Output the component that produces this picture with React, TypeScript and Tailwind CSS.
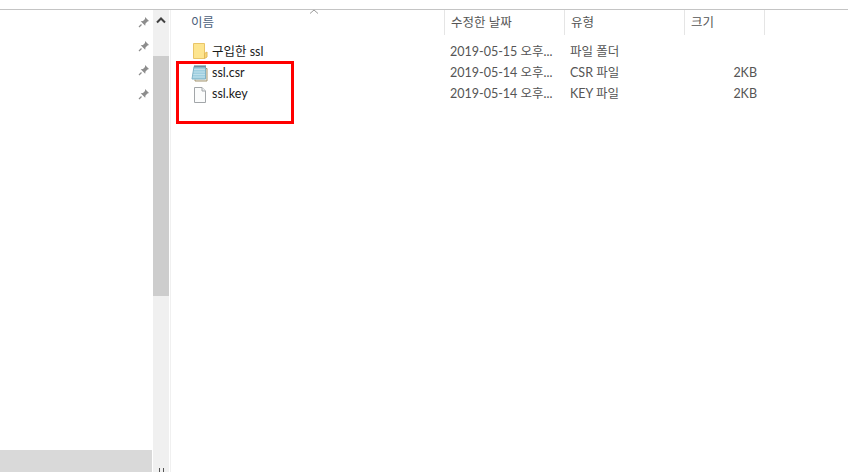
import React from "react";

const font = { fontFamily: 'Lato, "Noto Sans CJK KR", sans-serif' };

const FolderIcon = () => (
  <svg width="16" height="18" viewBox="0 0 16 18" className="shrink-0 -mt-[2px] mb-[2px]">
    <path d="M1.500 1.500h11v15h-11z" fill="#fde58f" stroke="#e9c568" />
    <path d="M12.500 16.500v-5l2.500-1.500v5z" fill="#f8d775" stroke="#e2b95a" />
  </svg>
);

const CsrIcon = () => (
  <svg width="17" height="17" viewBox="0 0 17 17" className="shrink-0 -ml-[1px]">
    <path d="M14.500 3.500h1.500v12.500h-12v-1.500" fill="#f3f1e8" stroke="#a39570" />
    <path d="M3 1.500h11.500v12.500h-13.500z" fill="#9fcfe0" stroke="#7fb2c6" />
    <path d="M3 4.500h11M2.700 7h11.300M2.300 9.500h11.700M1.800 12h12.200" stroke="#bfe0eb" />
    <path d="M4 0v2.500M6 0v2.500M8 0v2.500M10 0v2.500M12 0v2.500M14 0v2.500" stroke="#55707c" />
  </svg>
);

const BlankIcon = () => (
  <svg width="16" height="18" viewBox="0 0 16 18" className="shrink-0">
    <path d="M2.500 1.500h7.500l3.500 3.500v11.500h-11z" fill="#fbfcfc" stroke="#a2a6a9" />
    <path d="M10 1.500v3.500h3.500" fill="#eef0f1" stroke="#a2a6a9" />
  </svg>
);

const PinIcon = () => (
  <svg width="12" height="12" viewBox="0 0 12 12" className="shrink-0">
    <path d="M7 1l4 4-1.500.5-2 2-.300 2.300-4.500-4.500 2.300-.300 2-2z" fill="#8d8d8d" />
    <path d="M3.500 8.500L1 11" stroke="#8d8d8d" strokeWidth="1.200" />
  </svg>
);

const columns = [
  { label: "수정한 날짜", width: "w-[120px]" },
  { label: "유형", width: "w-[120px]" },
  { label: "크기", width: "w-[80px]" },
];

const rows = [
  { name: "구입한 ssl", date: "2019-05-15 오후...", type: "파일 폴더", size: "", icon: <FolderIcon /> },
  { name: "ssl.csr", date: "2019-05-14 오후...", type: "CSR 파일", size: "2KB", icon: <CsrIcon /> },
  { name: "ssl.key", date: "2019-05-14 오후...", type: "KEY 파일", size: "2KB", icon: <BlankIcon /> },
];

export default function App() {
  return (
    <div className="relative w-[848px] h-[472px] overflow-hidden bg-white text-[12.500px]" style={font}>
      <div className="h-[9px]" />
      <div className="h-[1px] bg-[#c4c4c4]" />
      <div className="flex h-[462px]">
        {/* nav pane */}
        <div className="w-[153px] flex flex-col justify-between">
          <div className="flex flex-col items-end gap-[12px] pt-[6px] pr-[3px]">
            <PinIcon />
            <PinIcon />
            <PinIcon />
            <PinIcon />
          </div>
          <div className="h-[22px] mr-[1px] bg-[#d9d9d9]" />
        </div>

        {/* scrollbar */}
        <div className="w-[16px] bg-[#f0f0f0] flex flex-col justify-between">
          <div>
            <div className="h-[46px] flex items-start justify-center pt-[7px]">
              <svg width="10" height="7" viewBox="0 0 10 7">
                <path d="M1 5.500L5 1.500l4 4" fill="none" stroke="#404040" strokeWidth="2" />
              </svg>
            </div>
            <div className="h-[240px] bg-[#cdcdcd]" />
          </div>
          <div className="h-[4px] flex justify-center gap-[3px]">
            <div className="w-[1px] h-[4px] bg-[#555]" />
            <div className="w-[1px] h-[4px] bg-[#555]" />
          </div>
        </div>
        <div className="w-[1px]" />
        <div className="w-[1px] bg-[#f0f0f0]" />

        {/* file list */}
        <div className="flex-1 relative">
          <div className="flex h-[25px] text-[#4c607a]">
            <div className="w-[273px] pl-[20px] leading-[25px]">이름</div>
            {columns.map((c) => (
              <div key={c.label} className={`${c.width} border-l border-[#e5e5e5] pl-[6px] leading-[25px] text-[#555]`}>
                {c.label}
              </div>
            ))}
            <div className="border-l border-[#e5e5e5]" />
          </div>
          <div className="absolute left-[138px] top-[-1px]">
            <svg width="10" height="5" viewBox="0 0 10 5">
              <path d="M1 4.500L5 1l4 3.500" fill="none" stroke="#9a9a9a" />
            </svg>
          </div>
          <div className="flex flex-col pt-[7px]">
            {rows.map((r) => (
              <div key={r.name} className="flex items-center h-[21px] text-[#555]">
                <div className="w-[273px] pl-[21px] flex items-center text-[#1a1a1a]">
                  <div className="w-[20px] shrink-0 flex">{r.icon}</div>
                  <span>{r.name}</span>
                </div>
                <div className="w-[120px] pl-[6px] whitespace-nowrap">{r.date}</div>
                <div className="w-[120px] pl-[6px]">{r.type}</div>
                <div className="w-[73px] text-right">{r.size}</div>
              </div>
            ))}
          </div>
        </div>
      </div>

      {/* red annotation box */}
      <div className="absolute left-[176px] top-[61px] w-[118px] h-[63px] border-[3px] border-[#ff0000]" />
    </div>
  );
}
